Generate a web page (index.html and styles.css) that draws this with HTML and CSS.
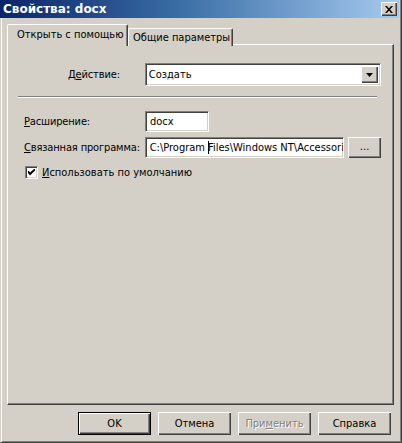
FILE: index.html
```html
<!DOCTYPE html>
<html lang="ru">
<head>
<meta charset="utf-8">
<title>Свойства: docx</title>
<link rel="stylesheet" href="styles.css">
</head>
<body>
<div class="window">
  <div class="titlebar">
    <span class="title">Свойства: docx</span>
    <span class="close"><svg width="8" height="7" viewBox="0 0 8 7"><path d="M0 0h2l2 2.5L6 0h2L5 3.5 8 7H6L4 4.5 2 7H0l3-3.5z" fill="#000"/></svg></span>
  </div>
  <div class="body">
    <div class="tabs">
      <div class="tab active">Открыть с помощью</div>
      <div class="tab">Общие параметры</div>
    </div>
    <div class="panel">
      <div class="row action-row">
        <span class="label action-label">Д<u>е</u>йствие:</span>
        <div class="combo">
          <span class="combo-text">Создать</span>
          <span class="combo-btn"><svg width="7" height="4" viewBox="0 0 7 4"><path d="M0 0h7L3.5 4z" fill="#000"/></svg></span>
        </div>
      </div>
      <div class="separator"></div>
      <div class="row ext-row">
        <span class="label"><u>Р</u>асширение:</span>
        <div class="field short"><span>docx</span></div>
      </div>
      <div class="row prog-row">
        <span class="label"><u>С</u>вязанная программа:</span>
        <div class="field long"><span>C:\Program <i class="caret"></i>Files\Windows NT\Accessori</span></div>
        <div class="btn small">...</div>
      </div>
      <div class="row check-row">
        <span class="checkbox"><svg width="7" height="7" viewBox="0 0 7 7"><path d="M0 2h1l1 1.5L6 0h1v1.5L2 6.5 0 4z" fill="#000"/></svg></span>
        <span class="check-label"><u>И</u>спользовать по умолчанию</span>
      </div>
    </div>
    <div class="buttons">
      <div class="btn default">OK</div>
      <div class="btn">Отмена</div>
      <div class="btn disabled">При<u>м</u>енить</div>
      <div class="btn">Справка</div>
    </div>
  </div>
</div>
</body>
</html>
```
FILE: styles.css
```css
* { box-sizing: border-box; }
html, body { margin: 0; padding: 0; }
body {
  width: 402px;
  height: 443px;
  background: #d4d0c8;
  font-family: "DejaVu Sans Condensed", "DejaVu Sans", sans-serif;
  font-size: 11px;
  color: #000;
  overflow: hidden;
}
u { text-decoration: underline; text-underline-offset: 1px; }
.window {
  width: 402px;
  height: 443px;
  display: flex;
  flex-direction: column;
  border-left: 1px solid #d4d0c8;
  border-right: 1px solid #404040;
  border-bottom: 1px solid #404040;
  box-shadow: inset 1px 0 #fff, inset -1px -1px #808080;
}
.titlebar {
  height: 18px;
  margin-left: -1px;
  margin-right: 2px;
  background: linear-gradient(90deg, #0a246a 0%, #3a6ea5 45%, #a6caf0 100%);
  display: flex;
  align-items: center;
  justify-content: space-between;
  padding: 0 2px 1px 3px;
}
.title {
  color: #fff;
  font-family: "DejaVu Sans", sans-serif;
  font-weight: bold;
  font-size: 12px;
  letter-spacing: 0;
}
.close {
  width: 16px;
  height: 14px;
  margin-top: 1px;
  background: #d4d0c8;
  display: flex;
  align-items: center;
  justify-content: center;
  box-shadow: inset 1px 1px #fff, inset -1px -1px #404040, inset -2px -2px #808080;
}
.body {
  flex: 1;
  padding: 6px 7px 0 6px;
  display: flex;
  flex-direction: column;
}
.tabs {
  display: flex;
  align-items: flex-end;
  height: 22px;
  position: relative;
  z-index: 2;
  margin-bottom: -2px;
}
.tab {
  height: 18px;
  padding: 2px 2px 0 4px;
  border-top: 1px solid #fff;
  border-left: 1px solid #fff;
  border-right: 1px solid #404040;
  box-shadow: inset -1px 0 #808080;
  border-radius: 2px 2px 0 0;
  background: #d4d0c8;
  white-space: nowrap;
}
.tab.active {
  height: 22px;
  width: 121px;
  padding: 3px 0 0 9px;
}
.panel {
  height: 361px;
  border-top: 1px solid #fff;
  border-left: 1px solid #fff;
  border-right: 1px solid #404040;
  border-bottom: 1px solid #404040;
  box-shadow: inset -1px -1px #808080;
  padding: 0 12px 0 16px;
  display: flex;
  flex-direction: column;
}
.row {
  display: flex;
  align-items: center;
}
.label {
  width: 121px;
  white-space: nowrap;
  letter-spacing: -0.15px;
}
.action-row {
  margin-top: 18px;
}
.action-label {
  padding-left: 44px;
}
.combo {
  width: 237px;
  height: 23px;
  background: #fff;
  display: flex;
  align-items: center;
  justify-content: space-between;
  border-top: 1px solid #808080;
  border-left: 1px solid #808080;
  border-right: 1px solid #fff;
  border-bottom: 1px solid #fff;
  box-shadow: inset 1px 1px #404040, inset -1px -1px #d4d0c8;
  padding: 2px 2px 2px 3px;
}
.combo-btn {
  width: 17px;
  height: 17px;
  background: #d4d0c8;
  display: flex;
  align-items: center;
  justify-content: center;
  box-shadow: inset 1px 1px #fff, inset -1px -1px #404040, inset -2px -2px #808080;
}
.separator {
  margin: 10px 4px 0 -6px;
  height: 2px;
  border-top: 1px solid #808080;
  border-bottom: 1px solid #fff;
}
.field {
  height: 21px;
  background: #fff;
  border-top: 1px solid #808080;
  border-left: 1px solid #808080;
  border-right: 1px solid #fff;
  border-bottom: 1px solid #fff;
  box-shadow: inset 1px 1px #404040, inset -1px -1px #d4d0c8;
  padding: 3px 3px 0 4px;
  overflow: hidden;
  white-space: nowrap;
}
.field.short { width: 64px; }
.field.long { width: 200px; }
.caret {
  display: inline-block;
  width: 1px;
  height: 13px;
  background: #000;
  vertical-align: -3px;
  margin-right: -1px;
}
.ext-row { margin-top: 13px; }
.prog-row { margin-top: 5px; }
.btn {
  height: 23px;
  width: 73px;
  background: #d4d0c8;
  display: flex;
  align-items: center;
  justify-content: center;
  box-shadow: inset 1px 1px #fff, inset -1px -1px #404040, inset -2px -2px #808080;
}
.btn.small {
  width: 33px;
  height: 21px;
  margin-left: 4px;
  padding-bottom: 2px;
}
.btn.default {
  border: 1px solid #000;
}
.btn.disabled {
  color: #808080;
  text-shadow: 1px 1px #fff;
}
.check-row { margin-top: 8px; padding-left: 1px; }
.checkbox {
  width: 13px;
  height: 13px;
  background: #fff;
  border-top: 1px solid #808080;
  border-left: 1px solid #808080;
  border-right: 1px solid #fff;
  border-bottom: 1px solid #fff;
  box-shadow: inset 1px 1px #404040, inset -1px -1px #d4d0c8;
  display: flex;
  align-items: center;
  justify-content: center;
  margin-right: 4px;
}
.buttons {
  display: flex;
  justify-content: flex-end;
  gap: 7px;
  margin-top: 7px;
  padding-right: 3px;
}
```
